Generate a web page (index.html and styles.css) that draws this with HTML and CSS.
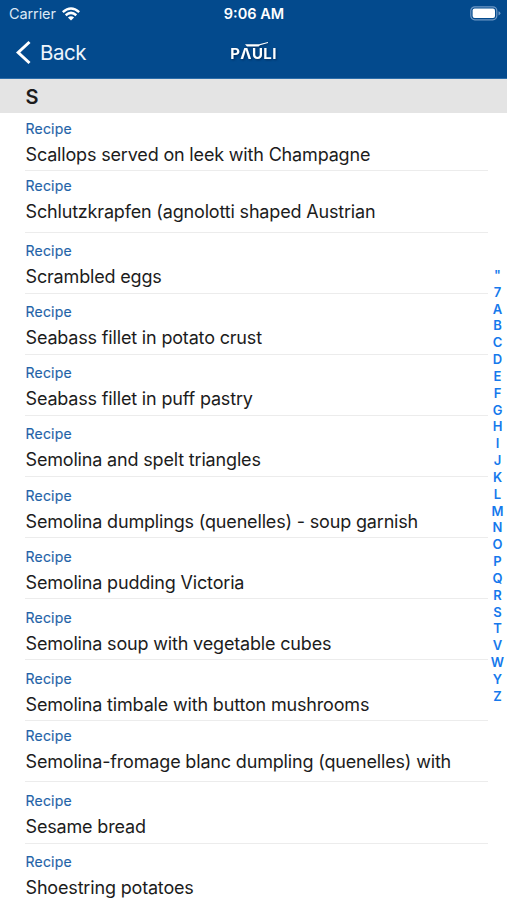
FILE: index.html
```html
<!DOCTYPE html>
<html lang="en">
<head>
<meta charset="utf-8">
<title>Recipes</title>
<link rel="stylesheet" href="styles.css">
</head>
<body>
<div class="screen">
  <header class="top">
    <div class="status">
      <div class="carrier"><span>Carrier</span>
        <svg class="wifi" width="18" height="14" viewBox="0 0 18 14" fill="none" stroke="#fff" stroke-width="2.5"><path d="M.8 5.1Q9-2 17.2 5.1M3.7 8.2Q9 3.6 14.3 8.2"/><path d="M5.9 10.4Q9 7.9 12.1 10.4L9 13.5Z" fill="#fff" stroke="none"/></svg>
      </div>
      <div class="time">9:06 AM</div>
      <svg class="battery" width="31" height="15" viewBox="0 0 31 15"><rect x=".8" y=".8" width="26" height="13" rx="4" fill="none" stroke="#6f98c5" stroke-width="1.2"/><rect x="2.6" y="2.6" width="22.4" height="9.4" rx="2" fill="#fff"/><path d="M28.5 5.2Q30.4 5.8 30.4 7.3T28.5 9.4Z" fill="#6f98c5"/></svg>
    </div>
    <div class="nav">
      <div class="back"><svg width="16" height="26" viewBox="0 0 16 26" fill="none" stroke="#fff" stroke-width="3"><path d="M14.5 2 3.2 12.5 14.5 23"/></svg><span>Back</span></div>
      <div class="logo">
        <svg width="24" height="6" viewBox="0 0 24 6"><path d="M0 2.2H14L23 0V.9L15 3.2 13.5 4.6H2Z" fill="#fff"/></svg>
        <span>P<i>Λ</i>ULI</span>
      </div>
    </div>
  </header>
  <h2 class="section">S</h2>
  <main class="list">
    <article class="row first"><small>Recipe</small><p>Scallops served on leek with Champagne</p></article>
    <article class="row high"><small>Recipe</small><p>Schlutzkrapfen (agnolotti shaped Austrian</p></article>
    <article class="row"><small>Recipe</small><p>Scrambled eggs</p></article>
    <article class="row"><small>Recipe</small><p>Seabass fillet in potato crust</p></article>
    <article class="row"><small>Recipe</small><p>Seabass fillet in puff pastry</p></article>
    <article class="row"><small>Recipe</small><p>Semolina and spelt triangles</p></article>
    <article class="row"><small>Recipe</small><p>Semolina dumplings (quenelles) - soup garnish</p></article>
    <article class="row"><small>Recipe</small><p>Semolina pudding Victoria</p></article>
    <article class="row"><small>Recipe</small><p>Semolina soup with vegetable cubes</p></article>
    <article class="row"><small>Recipe</small><p>Semolina timbale with button mushrooms</p></article>
    <article class="row high"><small>Recipe</small><p>Semolina-fromage blanc dumpling (quenelles) with</p></article>
    <article class="row"><small>Recipe</small><p>Sesame bread</p></article>
    <article class="row"><small>Recipe</small><p>Shoestring potatoes</p></article>
  </main>
  <nav class="index"><b>"</b><b>7</b><b>A</b><b>B</b><b>C</b><b>D</b><b>E</b><b>F</b><b>G</b><b>H</b><b>I</b><b>J</b><b>K</b><b>L</b><b>M</b><b>N</b><b>O</b><b>P</b><b>Q</b><b>R</b><b>S</b><b>T</b><b>V</b><b>W</b><b>Y</b><b>Z</b></nav>
</div>
</body>
</html>
```
FILE: styles.css
```css
* { box-sizing: border-box; }
body { margin: 0; background: #fff; font-family: Inter, "Liberation Sans", sans-serif; }
.screen { position: relative; width: 507px; height: 900px; overflow: hidden; }
.top { height: 79px; background: #034a8d; border-bottom: 1px solid #2d6da9; color: #fff; }
.status { height: 27px; display: grid; grid-template-columns: 1fr auto 1fr; align-items: center; padding: 0 6px 0 9px; }
.carrier { display: flex; align-items: center; gap: 6px; font-size: 14.5px; letter-spacing: -.1px; color: #dbe8f5; }
.time { font-size: 14.5px; font-weight: 600; transform: translateX(-1px); }
.battery { justify-self: end; }
.nav { height: 51px; display: grid; grid-template-columns: 1fr auto 1fr; align-items: center; padding: 0 15px; }
.back { display: flex; align-items: center; gap: 9px; font-size: 20.5px; letter-spacing: -.5px; color: #eef5fc; }
.logo { display: flex; flex-direction: column; align-items: center; margin-top: -4px; filter: drop-shadow(1px 1px 1px #012c5c); }
.logo svg { margin-left: 7px; }
.logo span { font: 700 15px/12px Inter, sans-serif; letter-spacing: .4px; }
.logo i { font-style: normal; }
.section { margin: 0; height: 34px; padding-left: 25.5px; background: #e4e4e4; color: #1c1c1c; font-size: 20px; font-weight: 600; line-height: 36px; }
.list { padding-left: 25px; width: 488px; }
.row { height: 61.12px; padding: 8.6px 0 0 .5px; border-bottom: 1.5px solid #ececec; }
.row.first { height: 58.4px; padding-top: 5.5px; }
.row.high { padding-top: 4.6px; }
.row small { display: block; font-size: 14px; line-height: 20px; letter-spacing: .22px; color: #1f63a8; -webkit-text-stroke: .15px #1f63a8; }
.row p { margin: 0; padding-top: 3px; font-size: 18px; line-height: 25px; letter-spacing: -.17px; color: #1c1c1c; white-space: nowrap; }
.index { position: absolute; right: 0; top: 267px; width: 19px; display: flex; flex-direction: column; align-items: center; color: #1579ec; }
.index b { height: 16.84px; font-size: 13px; font-weight: 600; line-height: 17px; }
```
